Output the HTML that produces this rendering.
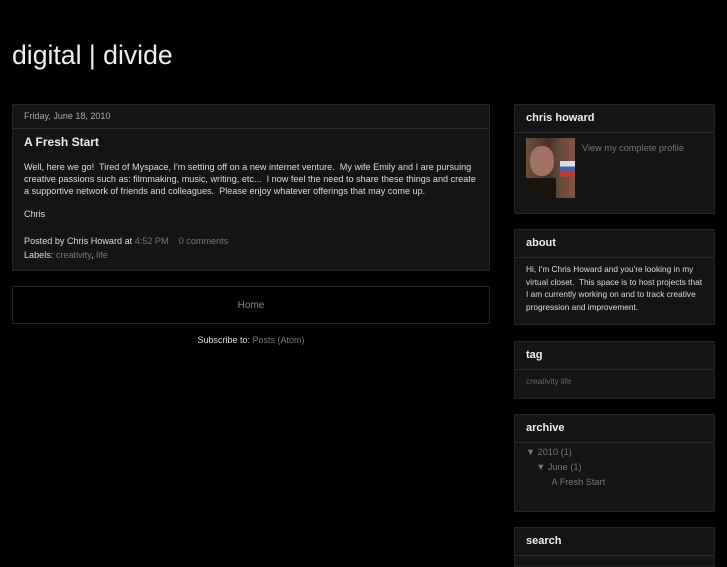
<!DOCTYPE html>
<html><head><style>
*{margin:0;padding:0;box-sizing:border-box}
body{width:727px;height:545px;background:#000;font-family:"Liberation Sans",sans-serif;color:#ccc;position:relative;overflow:hidden}
.a{position:absolute}
.box{position:absolute;background:#141414;border:1px solid #232323}
.hd{border-bottom:1px solid #2a2a2a;height:28px;padding:7px 11px;font-size:11px;font-weight:bold;color:#eee}
.g{color:#777}
</style></head><body>
<div class="a" style="left:12px;top:40px;font-size:26.6px;color:#eee">digital | divide</div>

<div class="box" style="left:12px;top:104px;width:478px;height:167px">
 <div style="height:24px;border-bottom:1px solid #2a2a2a;padding:6px 11px;font-size:9px;color:#aaa">Friday, June 18, 2010</div>
 <div class="a" style="left:11px;top:30px;font-size:12px;font-weight:bold;color:#eee">A Fresh Start</div>
 <div class="a" style="left:11px;top:56px;width:456px;font-size:9.1px;line-height:12px;color:#ddd">Well, here we go!&nbsp; Tired of Myspace, I'm setting off on a new internet venture.&nbsp; My wife Emily and I are pursuing creative passions such as: filmmaking, music, writing, etc...&nbsp; I now feel the need to share these things and create a supportive network of friends and colleagues.&nbsp; Please enjoy whatever offerings that may come up.</div>
 <div class="a" style="left:11px;top:104px;font-size:9.1px;color:#ddd">Chris</div>
 <div class="a" style="left:11px;top:131px;font-size:9.1px;color:#ddd">Posted by Chris Howard at <span class="g">4:52 PM</span> &nbsp;&nbsp; <span class="g">0 comments</span></div>
 <div class="a" style="left:11px;top:145px;font-size:9.1px;color:#ddd">Labels: <span class="g">creativity</span>, <span class="g">life</span></div>
</div>

<div class="a" style="left:12px;top:286px;width:478px;height:38px;border:1px solid #232323;text-align:center;font-size:10px;line-height:37px;color:#888">Home</div>
<div class="a" style="left:12px;top:335px;width:478px;text-align:center;font-size:9px;color:#ddd">Subscribe to: <span class="g">Posts (Atom)</span></div>

<div class="box" style="left:514px;top:104px;width:201px;height:110px">
 <div class="hd">chris howard</div>
 <div class="a" style="left:11px;top:33px;width:49px;height:60px;background:linear-gradient(90deg,#6a5040 0%,#4a3028 45%,#5a4a38 65%,#8a5040 100%)"><div class="a" style="left:4px;top:8px;width:24px;height:30px;border-radius:45%;background:#a07060"></div><div class="a" style="left:0;top:40px;width:30px;height:20px;background:#1a1410"></div><div class="a" style="left:34px;top:23px;width:15px;height:16px;background:linear-gradient(#ddd 0 33%,#4466aa 33% 66%,#c03a3a 66%)"></div></div>
 <div class="a g" style="left:67px;top:38px;font-size:9.2px">View my complete profile</div>
</div>

<div class="box" style="left:514px;top:229px;width:201px;height:96px">
 <div class="hd">about</div>
 <div style="padding:5px 11px;font-size:8.3px;line-height:12.7px;color:#ddd">Hi, I'm Chris Howard and you're looking in my virtual closet.&nbsp; This space is to host projects that I am currently working on and to track creative progression and improvement.</div>
</div>

<div class="box" style="left:514px;top:341px;width:201px;height:58px">
 <div class="hd">tag</div>
 <div class="g" style="padding:6px 11px;font-size:8.3px;color:#666">creativity life</div>
</div>

<div class="box" style="left:514px;top:414px;width:201px;height:98px">
 <div class="hd">archive</div>
 <div class="a g" style="left:11px;top:30px;font-size:9.2px;line-height:15px;color:#777">▼ 2010 (1)<br>&nbsp;&nbsp;&nbsp;&nbsp;▼ June (1)<br>&nbsp;&nbsp;&nbsp;&nbsp;&nbsp;&nbsp;&nbsp;&nbsp;&nbsp;&nbsp;A Fresh Start</div>
</div>

<div class="box" style="left:514px;top:527px;width:201px;height:40px">
 <div class="hd">search</div>
</div>
</body></html>
